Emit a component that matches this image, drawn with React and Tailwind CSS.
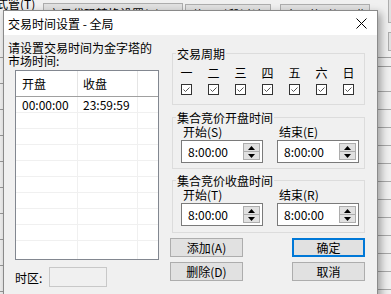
import React from 'react';

const Check = () => (
  <div className="w-[11px] h-[11px] border border-[#333] bg-white flex items-center justify-center">
    <svg width="9" height="9" viewBox="0 0 9 9">
      <path d="M1.5 4.5 L3.5 6.5 L7.5 2.5" fill="none" stroke="#555" strokeWidth="1" />
    </svg>
  </div>
);

const Spin = () => (
  <div className="flex flex-col w-[17px]">
    <div className="h-[9px] border border-[#adadad] bg-[#e1e1e1] flex items-center justify-center">
      <svg width="7" height="4" viewBox="0 0 7 4"><path d="M3.5 0 L7 4 L0 4Z" fill="#000" /></svg>
    </div>
    <div className="h-[8px] border border-t-0 border-[#adadad] bg-[#e1e1e1] flex items-center justify-center">
      <svg width="7" height="4" viewBox="0 0 7 4"><path d="M0 0 L7 0 L3.5 4Z" fill="#000" /></svg>
    </div>
  </div>
);

const TimeField = ({ label }) => (
  <div className="w-[82px]">
    <div className="leading-[13px] pl-[2px]">{label}</div>
    <div className="mt-[2px] h-[23px] border border-[#7a7a7a] bg-white flex items-center pl-[6px] pr-[2px]">
      <span className="flex-1 leading-[13px]">8:00:00</span>
      <Spin />
    </div>
  </div>
);

const Group = ({ title, className = '', children }) => (
  <div className={`ml-[2px] border border-[#dcdcdc] ${className}`}>
    <div className="-mt-[7px] ml-[3px] w-fit px-[1px] bg-[#f0f0f0] leading-[13px]">{title}</div>
    {children}
  </div>
);

const Btn = ({ children, primary }) => (
  <div
    className={`w-[73px] h-[19px] bg-[#e1e1e1] flex items-center justify-center leading-none ${
      primary ? 'border-2 border-[#0078d7]' : 'border border-[#adadad]'
    }`}
  >
    {children}
  </div>
);

const days = ['一', '二', '三', '四', '五', '六', '日'];

export default function App() {
  return (
    <div className="relative w-[391px] h-[294px] overflow-hidden bg-[#f0f0f0] text-[12px] text-black font-['Noto_Sans_CJK_SC',sans-serif]">
      {/* background window */}
      <div className="absolute left-[-4px] top-[-3px] leading-[13px]">式管(T)</div>
      <div className="absolute left-[43px] top-[3px] w-[140px] h-[20px] border border-[#adadad] bg-[#e1e1e1] pl-[4px] leading-[20px]">交易代码转换设置(C)</div>
      <div className="absolute left-[185px] top-[4px] w-[86px] h-[20px] border border-[#adadad] bg-[#e1e1e1] text-center leading-[20px]">使用时段过滤</div>
      <div className="absolute left-[280px] top-[4px] w-[90px] h-[20px] border border-[#adadad] bg-[#e1e1e1] pl-[4px] leading-[20px]">全局的时间周期</div>
      <div className="absolute left-[388px] top-[-1px] w-[20px] h-[24px] border border-[#adadad] bg-[#e1e1e1]" />
      <div className="absolute left-[388px] top-[32px] w-[20px] h-[19px] border border-[#adadad] bg-[#e1e1e1]" />
      <div className="absolute left-[370px] top-[57px] w-[30px] h-[10px] border-y border-[#a0a0a0]" />
      <div className="absolute left-[377px] top-[74px] w-[20px] flex flex-col">
        {Array.from({ length: 12 }).map((_, i) => (
          <div key={i} className="h-[18px] border-b border-[#a8a8a8]" />
        ))}
      </div>
      <div className="absolute left-0 top-[32px] w-[3px] flex flex-col">
        {Array.from({ length: 10 }).map((_, i) => (
          <div key={i} className="h-[26px] border-b border-[#999]" />
        ))}
      </div>

      {/* dialog */}
      <div className="absolute left-[3px] top-[10px] w-[375px] h-[291px] border border-[#8a8a8a] bg-[#f0f0f0] shadow-[3px_3px_8px_rgba(0,0,0,0.35)] flex flex-col">
        <div className="h-[24px] bg-white flex items-center pl-[4px] pr-[10px]">
          <span className="flex-1 leading-[13px]">交易时间设置 - 全局</span>
          <svg width="11" height="11" viewBox="0 0 11 11">
            <path d="M0.5 0.5 L10.5 10.5 M10.5 0.5 L0.5 10.5" stroke="#000" strokeWidth="1" />
          </svg>
        </div>

        <div className="flex">
          {/* left column */}
          <div className="w-[166px] pl-[4px] pt-[6px]">
            <div className="leading-[13px]">
              请设置交易时间为金字塔的
              <br />
              市场时间:
            </div>
            <div className="mt-[3px] ml-[7px] w-[144px] h-[190px] border border-[#828790] bg-white flex flex-col">
              <div className="h-[26px] border-b border-[#a0a0a0] grid grid-cols-[62px_60px_1fr]">
                <div className="border-r border-[#e5e5e5] pl-[6px] flex items-center">开盘</div>
                <div className="border-r border-[#e5e5e5] pl-[5px] flex items-center">收盘</div>
                <div />
              </div>
              {Array.from({ length: 9 }).map((_, i) => (
                <div key={i} className="h-[16px] border-b border-[#f0f0f0] grid grid-cols-[62px_60px_1fr]">
                  <div className="border-r border-[#f0f0f0] pl-[6px] leading-[15px]">{i === 0 ? '00:00:00' : ''}</div>
                  <div className="border-r border-[#f0f0f0] pl-[5px] leading-[15px]">{i === 0 ? '23:59:59' : ''}</div>
                  <div />
                </div>
              ))}
              <div className="flex-1 grid grid-cols-[62px_60px_1fr]">
                <div className="border-r border-[#f0f0f0]" />
                <div className="border-r border-[#f0f0f0]" />
                <div />
              </div>
            </div>
            <div className="mt-[7px] ml-[7px] flex items-center">
              <span className="w-[34px] leading-[13px]">时区:</span>
              <div className="w-[58px] h-[20px] border border-[#c8c8c8] bg-[#f0f0f0]" />
            </div>
          </div>

          {/* right column */}
          <div className="w-[195px] flex flex-col">
            <Group title="交易周期" className="mt-[18px] pb-[9px]">
              <div className="grid grid-cols-[repeat(7,27px)] mt-[6px]">
                {days.map((d) => (
                  <div key={d} className="text-center leading-[13px]">{d}</div>
                ))}
              </div>
              <div className="grid grid-cols-[repeat(7,27px)] justify-items-center mt-[5px]">
                {days.map((d) => (
                  <Check key={d} />
                ))}
              </div>
            </Group>

            <Group title="集合竞价开盘时间" className="mt-[12px] pb-[5px]">
              <div className="flex gap-[14px] pl-[8px] mt-[1px]">
                <TimeField label="开始(S)" />
                <TimeField label="结束(E)" />
              </div>
            </Group>

            <Group title="集合竞价收盘时间" className="mt-[11px] pb-[6px]">
              <div className="flex gap-[14px] pl-[8px] mt-[1px]">
                <TimeField label="开始(T)" />
                <TimeField label="结束(R)" />
              </div>
            </Group>

            <div className="flex justify-between mt-[5px]">
              <Btn>添加(A)</Btn>
              <Btn primary>确定</Btn>
            </div>
            <div className="flex justify-between mt-[5px]">
              <Btn>删除(D)</Btn>
              <Btn>取消</Btn>
            </div>
          </div>
        </div>
      </div>
    </div>
  );
}
